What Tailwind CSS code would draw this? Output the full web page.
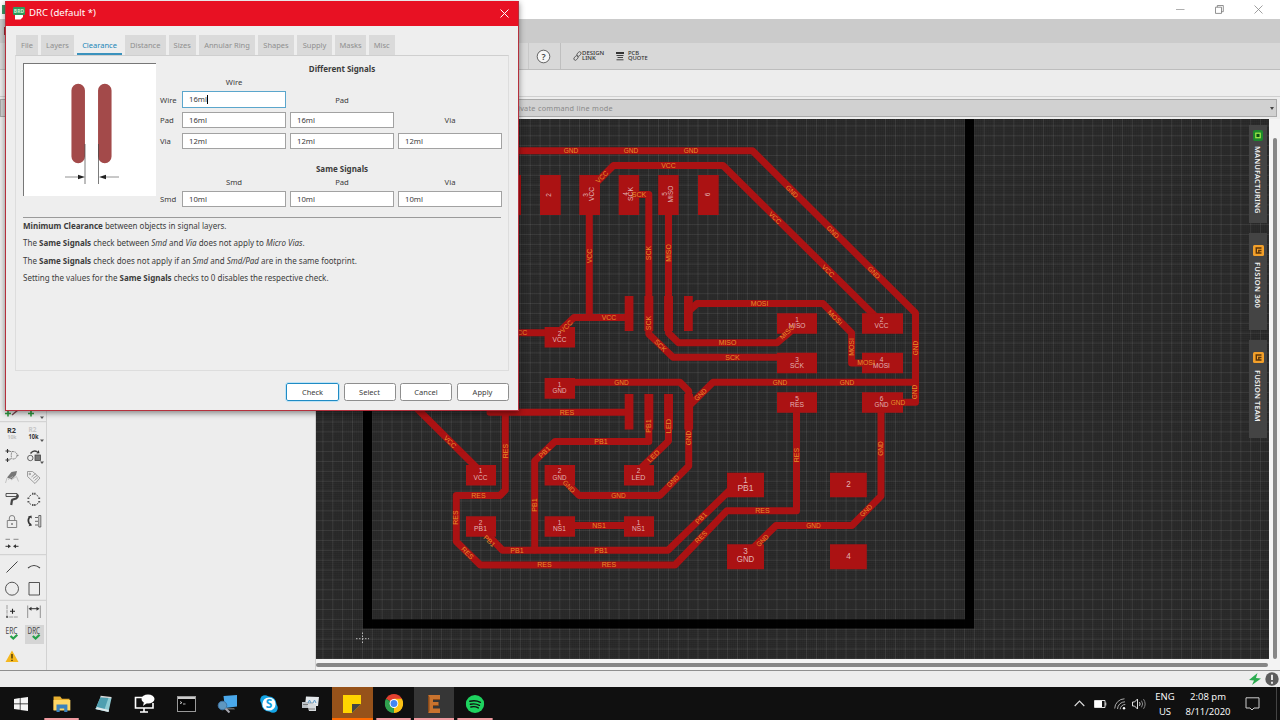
<!DOCTYPE html>
<html lang="en">
<head>
<meta charset="utf-8">
<title>DRC (default *)</title>
<script src="https://cdn.jsdelivr.net/npm/@tailwindcss/browser@4"></script>
</head>
<body class="w-[1280px] h-[720px] overflow-hidden bg-[#ededed] font-['Noto_Sans',sans-serif]">
<div class="relative flex flex-col w-[1280px] h-[720px] overflow-hidden">

  <!-- window title bar -->
  <header class="h-[19px] shrink-0 bg-white flex items-center justify-end pr-[17px] gap-[30px] text-[#999]">
    <svg class="mr-auto w-[6px] h-[14px]" viewBox="0 0 6 14"><path d="M2 2h4v9H2z" fill="#3f9a68"/></svg>
    <svg class="w-[9px] h-[9px]" viewBox="0 0 9 9" fill="none" stroke="#9a9a9a" stroke-width=".8"><path d="M0 4.5h8.500"/></svg>
    <svg class="w-[9px] h-[9px]" viewBox="0 0 9 9" fill="none" stroke="#777" stroke-width=".8"><path d="M.5 2.200h6v6.200h-6zM2.300 2.200V.5h6v6.200H6.500"/></svg>
    <svg class="w-[9px] h-[9px]" viewBox="0 0 9 9" fill="none" stroke="#888" stroke-width=".8"><path d="M.5.5l8 8M8.500.5l-8 8"/></svg>
  </header>
  <div class="h-[24px] shrink-0 bg-[#cbcbcb] pt-[8px]"><div class="w-[6px] h-[8px] border-r-2 border-[#9c3038]"></div></div>
  <div class="h-[27px] shrink-0 bg-[#d8d8d8] border-b border-[#bdbdbd] flex items-center pl-[528px]">
    <div class="w-px h-[26px] bg-[#c8c8c8]"></div>
    <svg class="ml-[7px] w-[15px] h-[15px]" viewBox="0 0 15 15"><circle cx="7.500" cy="7.500" r="6.300" fill="#f6f6f6" stroke="#555" stroke-width=".9"/><text x="7.500" y="10.800" text-anchor="middle" font-size="9" font-weight="600" fill="#444">?</text></svg>
    <div class="ml-[9px] w-px h-[26px] bg-[#bfbfbf]"></div>
    <svg class="ml-[12px] w-[9px] h-[10px]" viewBox="0 0 9 10" fill="none" stroke="#555" stroke-width=".9"><rect x="3.500" y="1.500" width="5" height="3" rx="1.500" transform="rotate(-50 6 3)"/><rect x=".5" y="5.500" width="5" height="3" rx="1.500" transform="rotate(-50 3 7)"/></svg>
    <div class="text-[6px] leading-[5px] font-medium text-[#333] w-[34px] whitespace-nowrap"><div class="h-[5px]">DESIGN</div><div class="h-[5px]">LINK</div></div>
    <svg class="w-[8px] h-[9px]" viewBox="0 0 8 9" stroke="#333"><path d="M0 1h8" stroke-width="2"/><path d="M.5 3.500h7M1.500 5.500h5.500M.5 7.800h7" stroke-width=".9"/></svg>
    <div class="text-[5.800px] leading-[5px] font-medium text-[#333] ml-[4px] whitespace-nowrap"><div class="h-[5px]">PCB</div><div class="h-[5px]">QUOTE</div></div>
  </div>
  <div class="h-[27px] shrink-0 bg-[#ededed] border-b border-[#cfcfcf]"></div>
  <div class="h-[22px] shrink-0 pt-[2px] pr-[3px]">
    <div class="h-[18px] bg-[#d1d1d1] border border-[#a9a9a9] flex items-center justify-between pl-[517px] pr-[2px] text-[7.300px] tracking-[0.260px] text-[#8a8a8a]">
      <span class="whitespace-nowrap">ivate command line mode</span>
      <svg class="w-[4px] h-[3px]" viewBox="0 0 4 3"><path d="M0 0h4L2 3z" fill="#444"/></svg>
    </div>
  </div>

  <div class="flex h-[551px] shrink-0">
    <!-- tool palette -->
    <aside class="w-[47px] border-r border-[#d2d2d2] pt-[283px] relative">
      <svg class="block w-[46px] h-[268px]" viewBox="0 402 46 268" fill="none" stroke="#444" stroke-width="1">
        <path d="M5 413.500h6M8 410.500v6M28 413.500h6M31 410.500v6" stroke="#2f9a3f" stroke-width="1.600"/>
        <path d="M12 415l6-5" stroke="#7a4a50" stroke-width="1.500"/>
        <path d="M40 416.500h4l-2 2.500zM40 439.500h4l-2 2.500zM40 461.500h4l-2 2.500z" fill="#555" stroke="none"/>
        <path d="M0 421.700h46M0 554.700h46M0 600.300h46" stroke="#cdcdcd"/>
        <g stroke="none" font-family="Noto Sans" font-weight="700" text-anchor="middle">
          <text x="11.500" y="432.500" font-size="6.800" fill="#333" textLength="9" lengthAdjust="spacingAndGlyphs">R2</text>
          <text x="12" y="438.500" font-size="6" fill="#c0c0c0" textLength="9" lengthAdjust="spacingAndGlyphs">10k</text>
          <text x="32.500" y="432" font-size="6.500" fill="#c8c8c8" textLength="8" lengthAdjust="spacingAndGlyphs">R2</text>
          <text x="33.500" y="438.900" font-size="6.800" fill="#333" textLength="10" lengthAdjust="spacingAndGlyphs">10k</text>
        </g>
        <path d="M5.500 451h4M7.500 449v4M5.500 460h4M7.500 458v4" stroke="#333" stroke-width="1.100"/>
        <path d="M9.500 451.500h2M9.500 459h2M12 451.500q5 0 5 3.800t-5 3.800q-1.500-3.800 0-7.600M17 455.300h2" stroke="#777" stroke-width=".9" stroke-dasharray="1.600 .7"/>
        <circle cx="30.300" cy="458" r="2.700" stroke-width=".8"/><rect x="35" y="455" width="5.500" height="5.500" fill="#777" stroke-width=".8"/>
        <path d="M30.500 453.500q3-4 7-1.500" stroke-width="1.400"/><path d="M36.500 453.500l3-.3-.8-3.200z" fill="#333" stroke="none"/>
        <path d="M7 477.500l4.500-5.500 5.500-1-1 4-4.500 4.500z" fill="#777" stroke="none"/><path d="M7 478l-1.500 5M11 480l5.500-3.500 2 5M8 479.500l5-3" stroke="#b9b9b9" stroke-width=".8"/>
        <g stroke="#888" stroke-width=".8"><path d="M27.500 471.500h5l7.500 6.500-5 5.500-7.500-7z"/><circle cx="29.800" cy="474" r=".8"/><path d="M31.500 477l4-3.500M33 478.500l4-3M34.500 480.500l3.500-3"/></g>
        <path d="M6 493.500h11v3H6z" stroke-width=".9"/><path d="M17 494.500q2 2-1 4l-4.500 1.500M12 500l-.8 5" stroke-width="2.200" stroke="#444"/>
        <g stroke="#555" stroke-width="1.900"><path d="M32 493.800h3.600M32 505h3.600M28.400 497.500v1.500M28.400 501v2M39.200 497.500v1.500M39.200 501v2" stroke-dasharray="1.500 .6"/><path d="M29.300 496.500l1.800-1.600M38.300 496.500l-1.800-1.600M29.300 503l1.800 1.600M38.300 503l-1.800 1.600" stroke-width="1"/></g>
        <g stroke="#777" stroke-width=".9"><path d="M7.300 520.500h9.400v7H7.300zM9.300 520.500v-2.500q0-2.500 2.700-2.500t2.700 2.500v2.500"/><path d="M12 523v2" stroke="#333"/></g>
        <path d="M29.500 517q-2.500 4 .5 7.500" stroke="#333" stroke-width="1.700"/><path d="M28 516.500l3.500-1 .3 3zM28.500 526.200l3.500-.6-1.300-2.500z" fill="#333" stroke="none"/><path d="M38.800 515.500h2v11.500h-2zM35 517.500h3M35 521.300h3M35 525h3" stroke-width=".8"/>
        <path d="M5.500 539.300h4.500M13.500 539.300h5" stroke="#888"/><path d="M5.500 546.300h3M15.500 546.300h3" stroke="#333"/><path d="M8 544.300l3 2-3 2zM16 544.300l-3 2 3 2z" fill="#333" stroke="none"/>
        <path d="M6.500 572.500L17.500 561.500"/><path d="M28 568q6-5 12 0" stroke-width="1.100"/>
        <circle cx="12" cy="588.700" r="6.500" stroke-width=".9"/><path d="M29 582.500h10.500v12.500H29z" stroke-width=".9"/>
        <path d="M7 605v12h11" stroke="#888" stroke-width=".8" stroke-dasharray="4 .7"/><circle cx="7" cy="617" r=".9" fill="#444" stroke="none"/><path d="M10 611.300h5M12.500 608.800v5" stroke="#222" stroke-width="1.100"/>
        <path d="M27.700 605.500v12.500M40.300 605.500v12.500" stroke="#888" stroke-width=".9"/><path d="M30 608.700h8" stroke="#333"/><path d="M31.500 606.700v4l-3-2zM36.500 606.700v4l3-2z" fill="#333" stroke="none"/>
        <rect x="25" y="625" width="19" height="19" fill="#d5d5d5" stroke="none"/>
        <g stroke="none" font-family="Noto Sans" font-size="8" fill="#444" text-anchor="middle"><text x="11.500" y="633.700" textLength="12" lengthAdjust="spacingAndGlyphs">ERC</text><text x="33.800" y="633.700" textLength="12.500" lengthAdjust="spacingAndGlyphs">DRC</text></g>
        <path d="M10.500 636l2.800 2.600 4-3.800M32.800 636l2.800 2.600 4-3.800" stroke="#26a04a" stroke-width="2.200"/>
        <path d="M12 650.500l6.500 11.500h-13z" fill="#f5b81f" stroke="none"/><path d="M12 654v4.500M12 659.700v1.300" stroke="#3a2c00" stroke-width="1.300"/>
      </svg>
    </aside>
    <div class="w-[268px]"></div>

    <!-- board editor -->
    <main class="w-[954px] border-l border-[#d0d0d0] bg-[#f3f3f3]">
      <svg id="board" class="block w-[953px] h-[540px]" viewBox="316 119 953 540" font-family="Liberation Sans">
        <defs>
          <pattern id="fine" x="362" y="639" width="1.974" height="1.974" patternUnits="userSpaceOnUse"><path d="M0 .3h1.974M.3 0v1.974" stroke="#fff" stroke-opacity=".045" stroke-width=".6"/></pattern>
          <pattern id="major" x="361.900" y="638.600" width="9.870" height="9.870" patternUnits="userSpaceOnUse"><path d="M0 .5h9.870M.5 0v9.870" stroke="#fff" stroke-opacity=".09" stroke-width=".9"/></pattern>
        </defs>
        <rect x="316" y="119" width="953" height="540" fill="#252525"/>
        <rect x="316" y="119" width="953" height="540" fill="url(#fine)"/>
        <rect x="316" y="119" width="953" height="540" fill="url(#major)"/>
        <path d="M367.500 119V623.800H969.500V119" fill="none" stroke="#000" stroke-opacity=".96" stroke-width="9.300"/>
        <path d="M362.500 632.500v12M356 638.700h13" stroke="#bbb" stroke-width="1" stroke-dasharray="1.500 1.500"/>
        <g fill="none" stroke="#ab1213" stroke-width="7" stroke-linejoin="round" stroke-linecap="round">
          <path d="M500 150.800H752.500L915.500 313V402.300H885"/>
          <path d="M592 187L613.500 165.500H723L881 322"/>
          <path d="M589.300 200V317.500M628 317.500H574L560 331M500 332.700H548"/>
          <path d="M633 194.500H648.800V334L673 357.300H785"/>
          <path d="M668.500 194V333L678.500 342.800H777L791 331"/>
          <path d="M688 312L697 303.600H823L851.600 333V363H866"/>
          <path d="M560 382.300H680L688.700 391V466L660 495.400H579L562 478"/>
          <path d="M689 406L713 382.300H915"/>
          <path d="M648.800 398V441.500H555L534.700 461V550"/>
          <path d="M668.500 398V441L641 468"/>
          <path d="M490 412.200H628M505.300 412V490L500 495.500H456.300V541.500L480.300 565H675L727 510.700H796.500V402"/>
          <path d="M415 406.500L479 470"/>
          <path d="M481 528L502.500 550.300H668L731 489"/>
          <path d="M560 525.500H640"/>
          <path d="M881 408V496L852 525.500H776L750 551"/>
        </g>
        <g fill="#ab1213">
          <path d="M500.500 175h20.500v40h-20.500zM540 175h20.700v40H540zM579.300 175h20.700v40h-20.700zM618.700 175h20.500v40h-20.500zM658.200 175h20.500v40h-20.500zM698 175h20.700v40H698z"/>
          <path d="M624.700 296h8.700v35h-8.700zM644.400 296h8.900v35h-8.900zM664.100 296h8.900v35h-8.900zM684 296h8.800v35H684z"/>
          <path d="M624.700 394h8.700v35.500h-8.700zM644.400 394h8.900v35.500h-8.900zM664.100 394h8.900v35.500h-8.900zM684.300 394h8.800v35.500h-8.800z"/>
          <path d="M777 313.300h40v20.500h-40zM862 313.300h41v20.500h-41zM777 352.800h40v20.500h-40zM862 352.800h41v20.500h-41zM777 392.300h40v20.500h-40zM862 392.300h41v20.500h-41z"/>
          <path d="M544.600 327h30.400v20.500h-30.400zM544.600 378h30.400v20.700h-30.400zM466 465h30v20.500h-30zM544.600 465h30.400v20.500h-30.400zM624 465h30v20.500h-30zM466 516.300h30v20.500h-30zM544.600 516.300h30.400v20.500h-30.400zM624 516.300h30v20.500h-30z"/>
          <path d="M727 472.700h37v24.600h-37zM830 472.700h36.800v24.600H830zM727 544.300h37v25h-37zM830 544.300h36.800v25H830z"/>
        </g>
      </svg>
      <div class="h-[11px] pt-[3.500px] pr-[1px]"><div class="h-[4.500px] rounded-full bg-[#868686]"></div></div>
    </main>
    <div class="w-[11px] bg-[#f3f3f3] pt-[19px] pl-[3.500px]"><div class="w-[4.500px] h-[521px] rounded-full bg-[#868686]"></div></div>
  </div>

  <!-- status bar -->
  <div class="h-[17px] shrink-0 border-t border-[#8f8f8f] bg-[#ededed] flex items-center justify-end gap-[3px] pr-px">
    <svg class="w-[14px] h-[14px]" viewBox="0 0 14 14"><path d="M9.500 1L1 8l5 .5L4 13 13 6.500l-5-.6z" fill="#2bab4f"/></svg>
    <svg class="w-[14px] h-[14px]" viewBox="0 0 14 14"><circle cx="7" cy="7" r="6.700" fill="#5c5c5c"/><path d="M7 2.800v5.200M7 9.700v2" stroke="#fff" stroke-width="1.700"/></svg>
  </div>

  <!-- taskbar -->
  <footer class="h-[33px] shrink-0 bg-[#101010] flex items-stretch text-white">
    <div class="w-[41.400px] flex items-center justify-center"><svg class="w-[14px] h-[14px]" viewBox="0 0 14 14" fill="#f4f4f4"><path d="M0 2l5.800-.9v5.500H0zM6.500 1L14 0v6.600H6.500zM0 7.300h5.800v5.500L0 12zM6.500 7.300H14V14l-7.500-1z"/></svg></div>
    <div class="w-[41.400px] flex items-center justify-center border-b-2 border-[#f09aa0] bg-clip-padding mx-0 scale-x-[0.840]"><svg class="w-[22px] h-[18px] mt-[2px]" viewBox="0 0 22 18"><path d="M1 1.500h8l2 2.200h9V15H1z" fill="#e8b030"/><path d="M1 5h20v10.500H1z" fill="#ffd767"/><path d="M4.500 17V9.500h13V17h-3.800v-3.500H8.300V17z" fill="#3b82bd"/></svg></div>
    <div class="w-[41.400px] flex items-center justify-center"><svg class="w-[19px] h-[18px]" viewBox="0 0 19 18"><path d="M6.500 2l11 1-3 14-13-3z" fill="#8ecbd3"/><path d="M6.500 2l8 .8-4.500 13L1.500 14z" fill="#4f9fb0"/><path d="M1.500 14l13 3 .4-2L3 12z" fill="#dfe8ea"/><path d="M6.500 1.500l11 1.200" stroke="#ddd" stroke-width="1.300"/></svg></div>
    <div class="w-[41.400px] flex items-center justify-center"><svg class="w-[21px] h-[19px]" viewBox="0 0 21 19"><path d="M9 3.500H1.500V14h17.500V9M10 14v3.500M6 18h8" fill="none" stroke="#fff" stroke-width="1.600"/><ellipse cx="14" cy="5" rx="6.500" ry="4.600" fill="#fff"/><path d="M10 8l-1 4 4-3z" fill="#fff"/></svg></div>
    <div class="w-[41.400px] flex items-center justify-center"><svg class="w-[19px] h-[16px]" viewBox="0 0 19 16"><rect x=".5" y=".5" width="18" height="15" fill="#060606" stroke="#999"/><path d="M1 2h17" stroke="#ccc" stroke-width="2"/><path d="M3 5.500l2 1.200-2 1M6 8h2.500" stroke="#ddd" fill="none" stroke-width=".8"/></svg></div>
    <div class="w-[41.400px] flex items-center justify-center"><svg class="w-[21px] h-[19px]" viewBox="0 0 21 19"><path d="M6.500 2L20 1v11.500L8 14z" fill="#4aa8ea"/><path d="M10 14h7l1 1.500H10z" fill="#666"/><circle cx="5.500" cy="11.500" r="4.300" fill="#5f97c0" stroke="#3f74a4"/><path d="M8.500 14.500l4 4" stroke="#a8a8b0" stroke-width="2"/></svg></div>
    <div class="w-[41.400px] flex items-center justify-center"><svg class="w-[18px] h-[18px]" viewBox="0 0 18 18"><circle cx="9" cy="9" r="7.500" fill="#13a5e6"/><circle cx="5" cy="5" r="4.800" fill="#13a5e6"/><circle cx="13" cy="13" r="4.800" fill="#13a5e6"/><circle cx="9" cy="9" r="6.600" fill="#fff"/><text x="9" y="13.300" text-anchor="middle" font-size="12" font-weight="700" fill="#12a0e0">S</text></svg></div>
    <div class="w-[41.400px] flex items-center justify-center"><svg class="w-[19px] h-[17px]" viewBox="0 0 19 17"><path d="M5 1.500l13 .5-1 9H4z" fill="#e3e8eb"/><path d="M1 7h11l1 6H1z" fill="#b9bfc4"/><path d="M6 9h9v7H8z" fill="#d5d9dc"/><path d="M7 8l1.500-3L10 8M12 8l1.500-3L15 8" stroke="#5d9ac8" fill="none"/><path d="M2 9.500h5M7 14h7" stroke="#777"/></svg></div>
    <div class="w-[41px] ml-[0.800px] flex items-center justify-center bg-[#96521a] border-b-2 border-[#ff6a00]"><svg class="w-[18px] h-[18px] mt-[2px]" viewBox="0 0 18 18"><path d="M0 0h18v9l-9 9H0z" fill="#ffd400"/><path d="M18 9h-9v9z" fill="#454545"/></svg></div>
    <div class="w-[41.400px] flex items-center justify-center border-b-2 border-[#f09aa0] scale-x-[0.840]"><svg class="w-[22px] h-[19px] mt-[2px]" preserveAspectRatio="none" viewBox="0 0 20 20"><path d="M10 10L1.340 5A10 10 0 0 1 18.660 5z" fill="#e3402f"/><path d="M10 10L18.660 5A10 10 0 0 1 10 20z" fill="#fbc116"/><path d="M10 10v10A10 10 0 0 1 1.340 5z" fill="#30a14e"/><path d="M10 5h8.660L14 12.500 10 20l4-8z" fill="#fbc116"/><circle cx="10" cy="10" r="4.700" fill="#fff"/><circle cx="10" cy="10" r="3.700" fill="#4285f4"/></svg></div>
    <div class="w-[40px] flex items-center justify-center bg-[#363636] border-b-2 border-[#f09aa0]"><svg class="w-[14px] h-[18px] mt-[2px]" viewBox="0 0 14 18"><path d="M1 0h12v4.500H6V7h5.500v3.500H6v3h7V18H1l1.200-2V2z" fill="#c9732e"/><path d="M1 0l1.200 2v14L1 18z" fill="#8c4a18"/><path d="M6 4.500h7M6 10.500h5.500" stroke="#8c4a18" stroke-width="1"/></svg></div>
    <div class="w-[42px] flex items-center justify-center border-b-2 border-[#f09aa0] scale-x-[0.840]"><svg class="w-[22px] h-[18px] mt-[2px]" preserveAspectRatio="none" viewBox="0 0 18 18"><circle cx="9" cy="9" r="9" fill="#1ed35f"/><path d="M4 6.300q5.500-1.500 10.300 1M4.500 9.300q4.700-1.200 8.800 1M5 12q4-1 7.200.9" fill="none" stroke="#111" stroke-width="1.400" stroke-linecap="round"/></svg></div>
    <div class="grow"></div>
    <div class="flex items-center text-[9.500px] leading-[15px] font-['Open_Sans',sans-serif]">
      <svg class="w-[11px] h-[7px]" viewBox="0 0 11 7"><path d="M.7 6l4.800-5 4.800 5" fill="none" stroke="#ddd" stroke-width="1.100"/></svg>
      <svg class="w-[13px] h-[8px] ml-[9px]" viewBox="0 0 13 8"><path d="M.5.5h10.500v7H.5zM11.800 2.500v3" fill="none" stroke="#ddd"/><path d="M1 1h7v6H1z" fill="#fff"/></svg>
      <svg class="w-[12px] h-[12px] ml-[7px]" viewBox="0 0 12 12" fill="none" stroke="#aaa" stroke-width="1"><path d="M.7 10.500A10 10 0 0 1 10.500.8M3.500 11A7.500 7.500 0 0 1 11 3.800M6.200 11.300A5 5 0 0 1 11.300 6.500"/><circle cx="10" cy="10.300" r="1.200" fill="#fff" stroke="none"/></svg>
      <svg class="w-[14px] h-[12px] ml-[6px]" viewBox="0 0 14 12" fill="none" stroke="#ddd" stroke-width="1"><path d="M.5 4h2L5.500 1v10l-3-3h-2z"/><path d="M7.500 4.200q1.200 1.800 0 3.600"/><path d="M9.500 2.700q2.300 3.300 0 6.600M11.500 1.200q3.300 4.800 0 9.600" stroke="#888"/></svg>
      <div class="w-[32px] ml-[3px] text-center whitespace-nowrap">ENG<br>US</div>
      <div class="w-[52px] text-center whitespace-nowrap ml-px">2:08 pm<br>8/11/2020</div>
      <svg class="w-[15px] h-[14px] ml-[11px] mr-[16px]" viewBox="0 0 15 14"><path d="M1 .8h13v10.200H9l-2 2-2-2H1z" fill="none" stroke="#ccc"/></svg>
      <div class="w-px h-[33px] bg-[#444] mr-[3px]"></div>
    </div>
  </footer>

  <!-- docked side tabs over the board -->
  <div class="absolute left-[1249px] top-[125px] w-[18px] flex flex-col gap-[10px] text-[7.500px] font-semibold text-[#f2f2f2]">
    <div class="h-[97.500px] bg-[#444] flex flex-col items-center pt-[5px] gap-[5px]">
      <svg class="w-[10px] h-[11px] shrink-0" viewBox="0 0 10 11"><rect width="10" height="11" rx="2" fill="#1c8a2c"/><rect x="2.800" y="3.200" width="4.400" height="4.500" fill="#0c5018" stroke="#a6f04a" stroke-width="1.200"/></svg>
      <span class="[writing-mode:vertical-rl] leading-[12px] whitespace-nowrap tracking-[0.120px]">MANUFACTURING</span>
    </div>
    <div class="h-[97.500px] bg-[#444] flex flex-col items-center pt-[12.500px] gap-[6px]">
      <svg class="w-[11px] h-[11px] shrink-0" viewBox="0 0 11 11"><rect width="11" height="11" rx="1.500" fill="#f3a02a"/><path d="M2.500 3H8.500M3.300 3v5h5.200M5.800 8V5.500h2.700" stroke="#5c3508" stroke-width="1.400" fill="none"/></svg>
      <span class="[writing-mode:vertical-rl] leading-[12px] whitespace-nowrap tracking-[0.300px]">FUSION 360</span>
    </div>
    <div class="h-[97.500px] bg-[#444] flex flex-col items-center pt-[12px] gap-[7px]">
      <svg class="w-[11px] h-[11px] shrink-0" viewBox="0 0 11 11"><rect width="11" height="11" rx="1.500" fill="#f3a02a"/><path d="M2.500 3H8.500M3.300 3v5h5.200M5.800 8V5.500h2.700" stroke="#5c3508" stroke-width="1.400" fill="none"/></svg>
      <span class="[writing-mode:vertical-rl] leading-[12px] whitespace-nowrap tracking-[0.100px]">FUSION TEAM</span>
    </div>
  </div>

  <!-- DRC dialog -->
  <section class="absolute left-[5px] top-[1px] w-[514px] h-[410px] bg-[#eeeeee] border border-[#b5303c] shadow-[0_2px_6px_rgba(0,0,0,0.45)] flex flex-col text-[7.500px] text-[#3c3c3c]">
    <div class="h-[25px] shrink-0 -mt-px bg-[#e81123] flex items-center pl-[7px] pr-[9.500px] text-white text-[9.600px]">
      <svg class="w-[12px] h-[13px]" viewBox="0 0 12 13"><path d="M2 5h8v5l-2.500 2.500H2z" fill="#fff"/><rect width="12" height="8" rx="1" fill="#2f9a5c"/><text x="6" y="6" text-anchor="middle" font-size="5" font-weight="700" fill="#c9f0d6">BRD</text></svg>
      <span class="ml-[4px] whitespace-nowrap">DRC (default *)</span>
      <svg class="ml-auto w-[9px] h-[9px]" viewBox="0 0 9 9"><path d="M.5.5l8 8M8.500.5l-8 8" stroke="#fff" stroke-width="1"/></svg>
    </div>
    <nav class="mt-[9px] ml-[10px] h-[20px] shrink-0 flex gap-[3px] text-[#8f8f8f] leading-[20px] text-center">
      <div class="w-[22px] bg-[#dadada]">File</div>
      <div class="w-[33px] bg-[#dadada]">Layers</div>
      <div class="w-[45px] text-[#2186b8] border-b-2 border-[#3b92bd] leading-[20px]">Clearance</div>
      <div class="w-[40.500px] bg-[#dadada]">Distance</div>
      <div class="w-[27.500px] bg-[#dadada]">Sizes</div>
      <div class="w-[56px] bg-[#dadada]">Annular Ring</div>
      <div class="w-[36px] bg-[#dadada]">Shapes</div>
      <div class="w-[35px] bg-[#dadada]">Supply</div>
      <div class="w-[31px] bg-[#dadada]">Masks</div>
      <div class="w-[25.500px] bg-[#dadada]">Misc</div>
    </nav>
    <div class="mx-[9px] h-[316px] shrink-0 border border-[#dddddd] border-t-[#cfcfcf] px-[7px] pt-[7px]">
      <div class="flex h-[154.500px] border-b border-[#9a9a9a]">
        <svg class="w-[133px] h-[133px] shrink-0 bg-white border-t border-l border-[#777]" viewBox="24 64 132 132"><path d="M78.200 90.500V156.500M104.800 90.500V156.500" stroke="#a34a4a" stroke-width="13.500" stroke-linecap="round"/><path d="M85 144v40M98.500 144v40" stroke="#444" stroke-width=".7"/><path d="M65 177h14M105 177h14" stroke="#777" stroke-width=".8"/><path d="M78 174.700l7 2.300-7 2.300zM106 174.700l-7 2.300 7 2.300z" fill="#222"/></svg>
        <div class="ml-[4px] -mt-px w-[346px] h-[147px] shrink-0 grid grid-cols-[18px_104px_104px_104px] gap-x-[4px] grid-rows-[13px_14px_21px_20.500px_21px_23px_14px_20px] items-center leading-[12px] whitespace-nowrap text-[7.700px]">
          <b class="col-start-2 col-span-3 text-center text-[8px]">Different Signals</b>
          <span class="col-start-2 text-center">Wire</span><i class="col-span-2"></i>
          <span>Wire</span><div class="h-[17px] bg-white border border-[#5ba6cc] pl-[6px] leading-[15px]">16ml<span class="inline-block w-px h-[9px] bg-black align-[-2px]"></span></div><span class="text-center">Pad</span><i></i>
          <span>Pad</span><div class="h-[16px] bg-white border border-[#a2a2a2] pl-[6px] leading-[14px]">16ml</div><div class="h-[16px] bg-white border border-[#a2a2a2] pl-[6px] leading-[14px]">16ml</div><span class="text-center">Via</span>
          <span>Via</span><div class="h-[16px] bg-white border border-[#a2a2a2] pl-[6px] leading-[14px]">12ml</div><div class="h-[16px] bg-white border border-[#a2a2a2] pl-[6px] leading-[14px]">12ml</div><div class="h-[16px] bg-white border border-[#a2a2a2] pl-[6px] leading-[14px]">12ml</div>
          <b class="col-start-2 col-span-3 text-center text-[8px] self-end">Same Signals</b>
          <span class="col-start-2 text-center">Smd</span><span class="text-center">Pad</span><span class="text-center">Via</span>
          <span>Smd</span><div class="h-[16px] bg-white border border-[#a2a2a2] pl-[6px] leading-[14px]">10ml</div><div class="h-[16px] bg-white border border-[#a2a2a2] pl-[6px] leading-[14px]">10ml</div><div class="h-[16px] bg-white border border-[#a2a2a2] pl-[6px] leading-[14px]">10ml</div>
        </div>
      </div>
      <div class="pt-[2.500px] flex flex-col gap-[5.300px] leading-[12px] whitespace-nowrap text-[8px]">
        <p><b>Minimum Clearance</b> between objects in signal layers.</p>
        <p>The <b>Same Signals</b> check between <i>Smd</i> and <i>Via</i> does not apply to <i>Micro Vias</i>.</p>
        <p>The <b>Same Signals</b> check does not apply if an <i>Smd</i> and <i>Smd/Pad</i> are in the same footprint.</p>
        <p>Setting the values for the <b>Same Signals</b> checks to 0 disables the respective check.</p>
      </div>
    </div>
    <div class="mt-[12px] mr-[9.500px] flex justify-end gap-[4.500px] h-[18px] leading-[16px] text-center">
      <div class="w-[53px] rounded-[2px] bg-white border-[1.500px] border-[#1f8bc4] outline outline-[#bfe3f5]">Check</div>
      <div class="w-[52px] rounded-[2.500px] bg-white border border-[#8e8e8e]">Select</div>
      <div class="w-[52px] rounded-[2.500px] bg-white border border-[#8e8e8e]">Cancel</div>
      <div class="w-[52px] rounded-[2.500px] bg-white border border-[#8e8e8e]">Apply</div>
    </div>
  </section>
</div>

<script>
// net names on the copper: text, x, y, rotation
const nets = [
 ['GND',571,151,0],['GND',631,151,0],['GND',691,151,0],['VCC',668.5,165.5,0],['VCC',602,177,-45],
 ['SCK',639,195,0],['VCC',589.3,256,-90],['SCK',648.8,253,-90],['MISO',668.5,253,-90],
 ['GND',792,191.5,45],['GND',833,232,45],['GND',874,272.5,45],['VCC',775,218,45],['VCC',828,271,45],
 ['VCC',609,318,0],['VCC',566.500,326.500,-45],['VCC',520,333,0],['SCK',648.8,323,-90],['SCK',660.5,345.5,45],
 ['MOSI',759.5,303.600,0],['MOSI',835,317.5,45],['MISO',727.5,343,0],['MISO',787,332,-45],['SCK',732.500,357.5,0],
 ['MOSI',851.6,347,-90],['MOSI',866,363,0],['GND',915.500,348,-90],['GND',915,392,-90],['GND',898,402.500,0],
 ['GND',621.5,382.3,0],['GND',780,382.3,0],['GND',847,382.3,0],['GND',700.5,394.5,-45],['RES',567,412.2,0],
 ['PB1',648.8,426,-90],['LED',668.500,426,-90],['PB1',601,441.500,0],['PB1',544.5,452,-45],['LED',653.5,456,-45],
 ['GND',688.700,438,-90],['VCC',450,442,45],['RES',505.300,451,-90],['RES',478.5,495.500,0],['RES',456,517.500,-90],
 ['PB1',534.700,505,-90],['GND',569,486.500,45],['GND',618.5,495.500,0],['GND',673,481,-45],['NS1',599,525.500,0],
 ['PB1',489.500,541,45],['PB1',517,550.3,0],['PB1',601,550.3,0],['RES',467.500,553,45],['RES',544.500,565,0],['RES',609,565,0],
 ['PB1',701,518,-45],['RES',701,537,-45],['RES',762.500,510.700,0],['RES',796.500,455,-90],['GND',881,448.500,-90],
 ['GND',866,510.500,-45],['GND',813.500,525.500,0],['GND',762.500,540.500,-45]];
// pad numbers and signal names: text, x, y, rotation, size
const pads = [
 ['2',548.5,195,-90,6.5],['3',586,195,-90,6.5],['VCC',591.500,194,-90,6.5],['4',625.500,194,-90,6.5],['SCK',631,194,-90,6.5],
 ['5',664.500,194,-90,6.5],['MISO',671,194,-90,6.5],['6',707.500,194.500,-90,6.5],
 ['1',797,320,0,6.5],['MISO',797,326,0,6.5],['2',881.5,320,0,6.5],['VCC',881.5,326,0,6.5],['3',797,359.500,0,6.5],['SCK',797,365.500,0,6.5],
 ['4',881.5,359.500,0,6.5],['MOSI',881.5,365.500,0,6.5],['5',797,399,0,6.5],['RES',797,405,0,6.5],['6',881.5,399,0,6.5],['GND',881.5,405,0,6.5],
 ['2',559.5,333.500,0,6.5],['VCC',559.5,339.500,0,6.5],['1',559.5,385,0,6.5],['GND',559.5,391,0,6.5],['1',480.500,471,0,6.5],['VCC',480.500,477.500,0,6.5],
 ['2',559.5,471,0,6.5],['GND',559.5,477.500,0,6.5],['2',638.5,471,0,6.5],['LED',638.5,477.500,0,6.5],
 ['2',480.500,522.500,0,6.5],['PB1',480.500,528.500,0,6.5],['1',559.5,522.500,0,6.5],['NS1',559.5,528.500,0,6.5],['1',638.5,522.500,0,6.5],['NS1',638.5,528.500,0,6.5],
 ['1',745.5,480.500,0,8.2],['PB1',745.5,488,0,8.2],['2',848.5,484.500,0,8.2],['3',745.5,551.500,0,8.2],['GND',745.5,559.500,0,8.2],['4',848.5,556,0,8.2]];
const board = document.getElementById('board');
function put([text, x, y, rot, size], fill, base) {
  const s = size || base;
  const el = document.createElementNS('http://www.w3.org/2000/svg', 'text');
  el.setAttribute('transform', `translate(${x} ${y}) rotate(${rot})`);
  el.setAttribute('y', s * 0.36);
  el.setAttribute('text-anchor', 'middle');
  el.setAttribute('font-size', s);
  el.setAttribute('fill', fill);
  if (text.length > 1) {
    el.setAttribute('textLength', s * (text.length === 4 ? 2.6 : 2.13) * (text.includes('1') ? 0.93 : 1));
    el.setAttribute('lengthAdjust', 'spacingAndGlyphs');
  }
  el.textContent = text;
  board.appendChild(el);
}
pads.forEach(p => put(p, '#e2b4b4', 6.5));
nets.forEach(n => put(n, '#e8902a', 6.8));
</script>
</body>
</html>
